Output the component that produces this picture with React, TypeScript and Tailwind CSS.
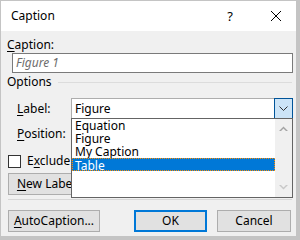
import React from "react";

function U({ c }: { c: string }) {
  return <span className="underline underline-offset-[2px]">{c}</span>;
}

export default function App() {
  return (
    <div className="w-[300px] h-[240px] box-border border-t border-l border-r-[4px] border-b-[4px] border-[#c4c4c4] bg-[#f0f0f0] text-[12px] leading-[16px] text-black flex flex-col relative font-['Noto_Sans',sans-serif] overflow-hidden">
      {/* Title bar */}
      <div className="h-[30px] bg-white flex items-center shrink-0">
        <div className="pl-[10px] flex-1">Caption</div>
        <div className="w-[20px] text-center text-[13px] mr-[30px]">?</div>
        <svg width="12" height="12" viewBox="0 0 12 12" className="mr-[14px]">
          <path d="M1 1 L11 11 M11 1 L1 11" stroke="#000" strokeWidth="1" />
        </svg>
      </div>

      {/* Body */}
      <div className="flex flex-col">
        <div className="ml-[6px] mt-[6px] h-[16px]">
          <U c="C" />aption:
        </div>
        <div className="ml-[11px] mr-[3px] h-[20px] border border-[#7a7a7a] bg-white italic text-[#6d6d6d] pl-[3px] flex items-center">
          Figure 1
        </div>

        <div className="ml-[6px] mt-[1px] h-[16px] flex items-center">
          <span>Options</span>
          <div className="flex-1 h-px bg-[#dcdcdc] ml-[6px] mr-[4px]" />
        </div>

        <div className="mt-[8px] h-[22px] flex items-center">
          <div className="ml-[16px] w-[54px]">
            <U c="L" />abel:
          </div>
          <div className="w-[222px] h-[22px] border border-[#adadad] bg-white flex items-center">
            <span className="pl-[3px] flex-1">Figure</span>
            <div className="w-[19px] h-[22px] -mt-px -mr-px border border-[#005499] bg-[#cce4f7] flex items-center justify-center">
              <svg width="9" height="5" viewBox="0 0 9 5">
                <path d="M0.5 0.5 L4.5 4.5 L8.5 0.5" stroke="#333" strokeWidth="1" fill="none" />
              </svg>
            </div>
          </div>
        </div>

        <div className="mt-[3px] h-[22px] flex items-center">
          <div className="ml-[16px] w-[54px]">
            <U c="P" />osition:
          </div>
          <div className="w-[222px] h-[22px] border border-[#adadad] bg-white" />
        </div>

        <div className="mt-[9px] h-[14px] flex items-center">
          <div className="ml-[7px] w-[13px] h-[13px] border border-[#333] bg-white shrink-0" />
          <span className="ml-[6px] whitespace-nowrap">
            E<U c="x" />clude label
          </span>
        </div>

        <div className="mt-[5px] h-[22px] flex ml-[7px] gap-[8px]">
          <div className="w-[86px] h-[22px] border border-[#adadad] bg-[#e1e1e1] flex items-center justify-center">
            <U c="N" />ew Label...
          </div>
          <div className="w-[86px] h-[22px] border border-[#adadad] bg-[#e1e1e1]" />
          <div className="w-[86px] h-[22px] border border-[#adadad] bg-[#e1e1e1]" />
        </div>

        <div className="mt-[4px] ml-[7px] mr-[4px] h-px bg-[#d7d7d7]" />

        <div className="mt-[10px] h-[22px] flex">
          <div className="ml-[7px] w-[92px] h-[22px] border border-[#adadad] bg-[#e1e1e1] flex items-center justify-center">
            <U c="A" />utoCaption...
          </div>
          <div className="ml-[34px] w-[73px] h-[22px] border-2 border-[#0078d7] bg-[#e1e1e1] flex items-center justify-center">
            OK
          </div>
          <div className="ml-[10px] w-[74px] h-[22px] border border-[#adadad] bg-[#e1e1e1] flex items-center justify-center">
            Cancel
          </div>
        </div>
      </div>

      {/* Dropdown list overlay */}
      <div className="absolute left-[70px] top-[117px] w-[222px] h-[80px] border border-[#646464] bg-white flex">
        <div className="flex-1 flex flex-col leading-[13px]">
          <div className="h-[13px] pl-[3px]">Equation</div>
          <div className="h-[13px] pl-[3px]">Figure</div>
          <div className="h-[13px] pl-[3px]">My Caption</div>
          <div className="h-[13px] pl-[2px] bg-[#0078d7] text-white border border-dotted border-[#ff8c00]">Table</div>
        </div>
        <div className="w-[17px] bg-[#f0f0f0] flex flex-col items-center justify-between py-[7px]">
          <svg width="9" height="5" viewBox="0 0 9 5">
            <path d="M0 5 L4.5 0.5 L9 5 L7 5 L4.5 2.5 L2 5 Z" fill="#a3a3a3" />
          </svg>
          <svg width="9" height="5" viewBox="0 0 9 5">
            <path d="M0 0 L4.5 4.5 L9 0 L7 0 L4.5 2.5 L2 0 Z" fill="#c8c8c8" />
          </svg>
        </div>
      </div>
    </div>
  );
}
